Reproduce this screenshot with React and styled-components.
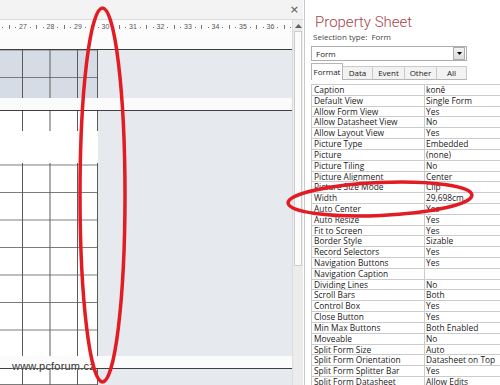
import React from "react";
import styled, { createGlobalStyle } from "styled-components";

const GlobalStyle = createGlobalStyle`
  html, body {
    margin: 0;
    padding: 0;
    background: #fff;
  }
  body {
    font-family: "Open Sans", "DejaVu Sans", sans-serif;
    color: #1a1a1a;
  }
`;

const properties = [
  ["Caption", "koně"],
  ["Default View", "Single Form"],
  ["Allow Form View", "Yes"],
  ["Allow Datasheet View", "No"],
  ["Allow Layout View", "Yes"],
  ["Picture Type", "Embedded"],
  ["Picture", "(none)"],
  ["Picture Tiling", "No"],
  ["Picture Alignment", "Center"],
  ["Picture Size Mode", "Clip"],
  ["Width", "29,698cm"],
  ["Auto Center", "Yes"],
  ["Auto Resize", "Yes"],
  ["Fit to Screen", "Yes"],
  ["Border Style", "Sizable"],
  ["Record Selectors", "Yes"],
  ["Navigation Buttons", "Yes"],
  ["Navigation Caption", ""],
  ["Dividing Lines", "No"],
  ["Scroll Bars", "Both"],
  ["Control Box", "Yes"],
  ["Close Button", "Yes"],
  ["Min Max Buttons", "Both Enabled"],
  ["Moveable", "No"],
  ["Split Form Size", "Auto"],
  ["Split Form Orientation", "Datasheet on Top"],
  ["Split Form Splitter Bar", "Yes"],
  ["Split Form Datasheet", "Allow Edits"],
];

const tabs = [
  { label: "Format", width: 32, active: true },
  { label: "Data", width: 30 },
  { label: "Event", width: 32 },
  { label: "Other", width: 32 },
  { label: "All", width: 30 },
];

const rulerNumbers = [26, 27, 28, 29, 30, 31, 32, 33, 34, 35, 36];

const Annotations = () => (
  <Overlay viewBox="0 0 500 385">
    <ellipse
      cx="102.5"
      cy="195"
      rx="22.5"
      ry="187"
      fill="none"
      stroke="#e31b23"
      strokeWidth="3.5"
    />
    <ellipse
      cx="380"
      cy="199"
      rx="92"
      ry="16.5"
      fill="none"
      stroke="#e31b23"
      strokeWidth="3.5"
      transform="rotate(-2.5 380 199)"
    />
  </Overlay>
);

export default function App() {
  return (
    <>
      <GlobalStyle />
      <Screen>
        <Designer>
          <TitleBar>
            <CloseButton>×</CloseButton>
          </TitleBar>
          <DesignBody>
            <Canvas>
              <Ruler>
                <RulerTrack>
                  {rulerNumbers.map((n) => (
                    <RulerStep key={n}>
                      <RulerNum>{n}</RulerNum>
                      <Dot />
                      <Tick />
                      <Dot />
                    </RulerStep>
                  ))}
                </RulerTrack>
              </Ruler>
              <Band height={15} />
              <Section height={48}>
                <GridArea $tint="#d6dce5" $offsetY={27} />
                <Backdrop />
              </Section>
              <Band height={12} />
              <Section height={245}>
                <GridArea $tint="#ffffff" $offsetY={26}>
                  <Control />
                </GridArea>
                <Backdrop />
              </Section>
              <Band height={12} />
              <Section grow>
                <GridArea $tint="#ffffff" $offsetY={15} />
                <Backdrop />
              </Section>
            </Canvas>
            <ScrollBar>
              <ScrollArrow>
                <svg width="7" height="4" viewBox="0 0 7 4">
                  <path d="M0 4 L3.5 0 L7 4 Z" fill="#606060" />
                </svg>
              </ScrollArrow>
              <Thumb />
            </ScrollBar>
          </DesignBody>
        </Designer>

        <PropertyPane>
          <Title>Property Sheet</Title>
          <SelectionType>Selection type:  Form</SelectionType>
          <Dropdown>
            <span>Form</span>
            <DropButton>
              <svg width="5" height="3" viewBox="0 0 5 3">
                <path d="M0 0 L5 0 L2.5 3 Z" fill="#000" />
              </svg>
            </DropButton>
          </Dropdown>
          <TabRow>
            {tabs.map((t) => (
              <Tab key={t.label} $active={t.active} style={{ width: t.width }}>
                {t.label}
              </Tab>
            ))}
          </TabRow>
          <PropTable>
            {properties.map(([key, value]) => (
              <React.Fragment key={key}>
                <KeyCell>{key}</KeyCell>
                <ValueCell>{value}</ValueCell>
              </React.Fragment>
            ))}
          </PropTable>
        </PropertyPane>

        <Watermark>www.pcforum.cz</Watermark>
        <Annotations />
      </Screen>
    </>
  );
}

const Screen = styled.div`
  position: relative;
  width: 500px;
  height: 385px;
  overflow: hidden;
  display: flex;
  background: #fff;
`;

const Designer = styled.div`
  width: 303px;
  flex-shrink: 0;
  display: flex;
  flex-direction: column;
`;

const TitleBar = styled.div`
  height: 20px;
  box-sizing: border-box;
  background: #f3f3f3;
  border-bottom: 1px solid #dadada;
  display: flex;
  justify-content: flex-end;
  align-items: center;
  padding-right: 4px;
`;

const CloseButton = styled.span`
  font-family: "DejaVu Sans", sans-serif;
  font-size: 11px;
  line-height: 11px;
  color: #505050;
`;

const DesignBody = styled.div`
  flex: 1;
  display: flex;
  min-height: 0;
`;

const Canvas = styled.div`
  width: 292px;
  display: flex;
  flex-direction: column;
  overflow: hidden;
`;

const Ruler = styled.div`
  height: 14px;
  flex-shrink: 0;
  background: #fcfcfc;
  overflow: hidden;
  display: flex;
  align-items: center;
`;

const RulerTrack = styled.div`
  display: flex;
  margin-left: -8.4px;
`;

const RulerStep = styled.div`
  width: 27.5px;
  flex-shrink: 0;
  display: grid;
  grid-template-columns: repeat(4, 1fr);
  align-items: center;
  justify-items: center;
`;

const RulerNum = styled.span`
  font-family: "Liberation Sans", sans-serif;
  font-size: 7px;
  line-height: 8px;
  color: #555;
`;

const Dot = styled.span`
  width: 1px;
  height: 1px;
  background: #777;
`;

const Tick = styled.span`
  width: 1px;
  height: 4px;
  background: #777;
`;

const Band = styled.div`
  height: ${(p) => p.height}px;
  flex-shrink: 0;
  background: #fbfbfb;
  border-bottom: 1px solid #3f3f3f;
`;

const Section = styled.div`
  display: flex;
  flex-shrink: 0;
  ${(p) => (p.grow ? "flex: 1;" : `height: ${p.height}px;`)}
`;

const GridArea = styled.div`
  width: 98px;
  box-sizing: border-box;
  border-right: 1px solid #5a5a5a;
  display: flex;
  flex-direction: column;
  background-color: ${(p) => p.$tint};
  background-image: linear-gradient(to right, #5a5a5a 0 1px, transparent 1px),
    linear-gradient(to bottom, #7a7a7a 0 1px, transparent 1px);
  background-size: 27.5px 100%, 100% 27.5px;
  background-position: 22px 0, 0 ${(p) => p.$offsetY}px;
`;

const Control = styled.div`
  margin-top: 20px;
  height: 32px;
  margin-right: -1px;
  background: #fff;
`;

const Backdrop = styled.div`
  flex: 1;
  background: #e6e9ee;
`;

const ScrollBar = styled.div`
  width: 11px;
  box-sizing: border-box;
  background: #ececec;
  border-left: 1px solid #dcdcdc;
  display: flex;
  flex-direction: column;
  align-items: stretch;
`;

const ScrollArrow = styled.div`
  height: 11px;
  display: flex;
  align-items: center;
  justify-content: center;
`;

const Thumb = styled.div`
  height: 233px;
  margin: 0 1px;
  background: #fbfbfb;
  border: 1px solid #cdcdcd;
`;

const PropertyPane = styled.div`
  flex: 1;
  min-width: 0;
  border-left: 1px solid #c9c9c9;
  margin-left: 1px;
  background: #fff;
  display: flex;
  flex-direction: column;
  overflow: hidden;
`;

const Title = styled.div`
  margin: 12px 0 0 10px;
  font-family: Roboto, "Open Sans", sans-serif;
  font-weight: 300;
  font-size: 15px;
  line-height: 20px;
  color: #a8434a;
  white-space: nowrap;
`;

const SelectionType = styled.div`
  margin-left: 8px;
  font-size: 8px;
  line-height: 10px;
  color: #444;
  white-space: pre;
`;

const Dropdown = styled.div`
  margin: 4px 0 0 6px;
  width: 156px;
  height: 17px;
  box-sizing: border-box;
  border: 1px solid #abadb3;
  display: flex;
  align-items: center;
  justify-content: space-between;
  padding: 0 1px 0 4px;
  font-size: 8px;
  color: #1a1a1a;
`;

const DropButton = styled.div`
  width: 12px;
  height: 13px;
  box-sizing: border-box;
  border: 1px solid #adadad;
  background: linear-gradient(#f2f2f2, #dcdcdc);
  display: flex;
  align-items: center;
  justify-content: center;
`;

const TabRow = styled.div`
  margin: 2px 0 0 6px;
  height: 17px;
  display: flex;
  align-items: flex-end;
`;

const Tab = styled.div`
  box-sizing: border-box;
  height: ${(p) => (p.$active ? 17 : 14)}px;
  border: 1px solid ${(p) => (p.$active ? "#b5b5b5" : "#cacaca")};
  border-bottom: ${(p) => (p.$active ? "none" : "1px solid #b5b5b5")};
  border-left-width: ${(p) => (p.$active ? 1 : 0)}px;
  background: ${(p) => (p.$active ? "#fff" : "#f2f2f2")};
  font-size: 8px;
  line-height: 12px;
  display: flex;
  align-items: center;
  justify-content: center;
  color: #1a1a1a;
`;

const PropTable = styled.div`
  margin: 4px 0 0 6px;
  width: 200px;
  display: grid;
  grid-template-columns: 113px 1fr;
  border-top: 1px solid #cbcbcb;
  border-left: 1px solid #cbcbcb;
`;

const Cell = styled.div`
  height: 10.82px;
  box-sizing: border-box;
  border-right: 1px solid #cbcbcb;
  border-bottom: 1px solid #cbcbcb;
  font-size: 8.4px;
  line-height: 10px;
  white-space: nowrap;
  overflow: hidden;
`;

const KeyCell = styled(Cell)`
  padding-left: 2px;
`;

const ValueCell = styled(Cell)`
  padding-left: 1px;
`;

const Watermark = styled.div`
  position: absolute;
  left: 12px;
  top: 360px;
  font-family: "Liberation Sans", Arial, sans-serif;
  font-size: 11px;
  line-height: 13px;
  letter-spacing: 0.2px;
  color: #333;
  text-shadow: 0 0 2px #fff;
`;

const Overlay = styled.svg`
  position: absolute;
  left: 0;
  top: 0;
  width: 500px;
  height: 385px;
  pointer-events: none;
`;
